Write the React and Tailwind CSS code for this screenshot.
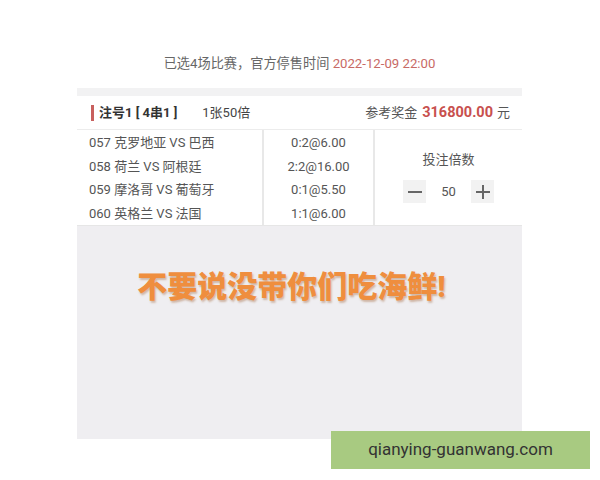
import React from "react";

const rows = [
  ["057 克罗地亚 VS 巴西", "0:2@6.00"],
  ["058 荷兰 VS 阿根廷", "2:2@16.00"],
  ["059 摩洛哥 VS 葡萄牙", "0:1@5.50"],
  ["060 英格兰 VS 法国", "1:1@6.00"],
];

export default function App() {
  return (
    <div
      className="relative w-[600px] h-[480px] bg-white overflow-hidden"
      style={{ fontFamily: "Roboto, 'Noto Sans CJK SC', sans-serif" }}
    >
      <div className="ml-[77px] w-[445px] flex flex-col">
        <div className="h-[88px] flex items-start justify-center pt-[55px]">
          <span className="text-[13.2px] leading-[18px] text-[#666]">
            已选4场比赛，官方停售时间{" "}
            <span className="text-[#c86a66]">2022-12-09 22:00</span>
          </span>
        </div>
        <div className="h-[8px] bg-[#f2f2f3]" />
        <div className="h-[34px] flex items-center border-b border-[#ececec] text-[13px]">
          <div className="w-[3px] h-[16px] bg-[#c8605e] ml-[14px]" />
          <span className="ml-[5px] font-bold text-[#333]">注号1 [ 4串1 ]</span>
          <span className="ml-[25px] text-[#444]">1张50倍</span>
          <span className="ml-auto text-[#555]">参考奖金</span>
          <span className="ml-[5px] font-bold text-[14.5px] text-[#c8504e]">316800.00</span>
          <span className="ml-[4px] mr-[12px] text-[#555]">元</span>
        </div>
        <div className="flex h-[96px] border-b border-[#e6e6e6]">
          <div className="w-[185px] flex flex-col pt-[1px]">
            {rows.map((r) => (
              <div key={r[0]} className="h-[23.5px] flex items-center pl-[12px] text-[13px] text-[#555]">
                {r[0]}
              </div>
            ))}
          </div>
          <div className="w-[2px] bg-[#e8e8e8]" />
          <div className="w-[109px] flex flex-col pt-[1px]">
            {rows.map((r) => (
              <div key={r[1]} className="h-[23.5px] flex items-center justify-center text-[13px] text-[#555]">
                {r[1]}
              </div>
            ))}
          </div>
          <div className="w-[2px] bg-[#e8e8e8]" />
          <div className="flex-1 flex flex-col items-center pt-[22px]">
            <span className="text-[13px] text-[#555] leading-[16px]">投注倍数</span>
            <div className="flex items-center mt-[12px]">
              <div className="w-[23px] h-[23px] bg-[#f2f2f2] flex items-center justify-center">
                <div className="w-[14px] h-[2px] bg-[#666]" />
              </div>
              <span className="w-[45px] text-center text-[13px] text-[#555]">50</span>
              <div className="w-[23px] h-[23px] bg-[#f2f2f2] flex items-center justify-center relative">
                <div className="w-[14px] h-[2px] bg-[#666]" />
                <div className="absolute w-[2px] h-[14px] bg-[#666]" />
              </div>
            </div>
          </div>
        </div>
        <div className="h-[213px] bg-[#efeef1] flex justify-center pt-[44px]">
          <span
            className="mr-[16px] text-[30px] leading-[34px] font-black text-[#ef8e3e]"
            style={{ textShadow: "1px 2px 2px rgba(150,80,30,0.35)" }}
          >
            不要说没带你们吃海鲜!
          </span>
        </div>
      </div>
      <div className="absolute left-[331px] top-[431px] w-[259px] h-[38px] bg-[#a3c77a]/95 flex items-center justify-center">
        <span className="text-[17px] text-[#333]">qianying-guanwang.com</span>
      </div>
    </div>
  );
}
